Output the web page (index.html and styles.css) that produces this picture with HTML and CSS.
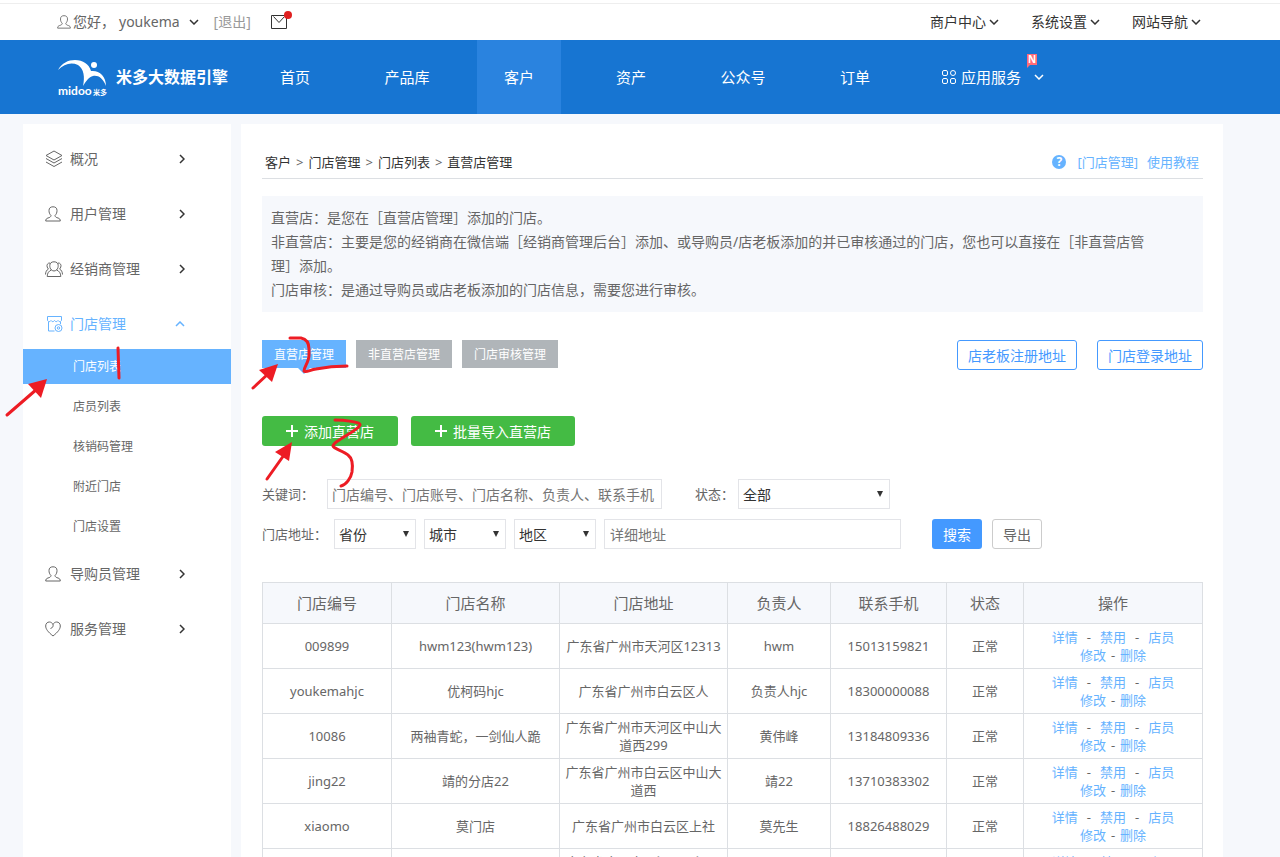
FILE: index.html
```html
<!DOCTYPE html>
<html lang="zh-CN">
<head>
    <meta charset="UTF-8">
    <meta name="viewport" content="width=device-width, initial-scale=1.0">
    <title>直营店管理</title>
    <link rel="stylesheet" href="styles.css">
</head>
<body>

<!-- shared icons -->
<svg class="sprite" aria-hidden="true">
    <symbol id="down" viewBox="0 0 10 6"><path d="M1 1l4 4 4-4"/></symbol>
    <symbol id="right" viewBox="0 0 6 10"><path d="M1 1l4 4-4 4"/></symbol>
    <symbol id="up" viewBox="0 0 10 6"><path d="M1 5l4-4 4 4"/></symbol>
    <symbol id="user" viewBox="0 0 16 16"><path d="M6 9.5C4.500 8 4 6.500 4 4.500 4 2 5.500.8 8 .8s4 1.200 4 3.700c0 2-.5 3.500-2 5 .2 1.500 1.200 2 3 2.500 1.500.4 2.200 1.200 2.300 3H.7c.1-1.800.8-2.600 2.300-3 1.800-.5 2.800-1 3-2.500z"/></symbol>
    <symbol id="plus" viewBox="0 0 12 12"><path d="M6 0v12M0 6h12"/></symbol>
</svg>

<div class="topbar">
    <div class="account">
        <svg class="account-icon"><use href="#user"/></svg>
        <span class="hello">您好，</span>
        <a class="username" href="#">youkema <svg class="down"><use href="#down"/></svg></a>
        <a class="logout" href="#">[退出]</a>
        <a class="mail" href="#" aria-label="消息">
            <svg width="16" height="14" viewBox="0 0 16 14"><path d="M.5.5h15v13H.5zM2.500 1.500l5.500 6 5.500-6"/></svg>
        </a>
    </div>
    <div class="top-links">
        <a href="#">商户中心 <svg class="down"><use href="#down"/></svg></a>
        <a href="#">系统设置 <svg class="down"><use href="#down"/></svg></a>
        <a href="#">网站导航 <svg class="down"><use href="#down"/></svg></a>
    </div>
</div>

<header class="header">
    <a class="logo" href="#">
        <svg class="logo-mark" width="50" height="38" viewBox="0 0 50 38">
            <path d="M0 12C4 5 10 2 17 2c8 0 14 4 16 11 8-1 15 5 15 15-3-8-8-11-13-10-4 1-7 5-10 10 2-9 1-17-5-21C13 4 6 6 0 12z"/>
            <circle cx="36" cy="7" r="3"/>
            <text class="logo-name" x="0" y="37">midoo</text>
            <text class="logo-sub" x="35" y="37">米多</text>
        </svg>
        <span>米多大数据引擎</span>
    </a>
    <nav class="nav">
        <a href="#">首页</a>
        <a href="#">产品库</a>
        <a class="active" href="#">客户</a>
        <a href="#">资产</a>
        <a href="#">公众号</a>
        <a href="#">订单</a>
    </nav>
    <a class="apps" href="#">
        <svg width="14" height="14" viewBox="0 0 14 14"><rect x=".5" y=".5" width="5" height="5" rx="1.500"/><rect x="8.500" y=".5" width="5" height="5" rx="2.500"/><rect x=".5" y="8.500" width="5" height="5" rx="1.500"/><rect x="8.500" y="8.500" width="5" height="5" rx="1.500"/></svg>
        <span>应用服务</span>
        <svg class="down"><use href="#down"/></svg>
        <span class="new">N</span>
    </a>
</header>

<div class="layout">
    <aside class="sidebar">
        <a class="menu" href="#">
            <svg class="menu-icon" viewBox="0 0 18 18"><path d="M9 1l8 4.500L9 10 1 5.500zM1 8.500L9 13l8-4.500M1 12l8 4.500 8-4.500"/></svg>
            <span>概况</span><svg class="right"><use href="#right"/></svg>
        </a>
        <a class="menu" href="#">
            <svg class="menu-icon user"><use href="#user"/></svg>
            <span>用户管理</span><svg class="right"><use href="#right"/></svg>
        </a>
        <a class="menu" href="#">
            <svg class="menu-icon" viewBox="0 0 18 18"><path d="M6.500 10C5 8.500 4.800 7 4.800 5.500 4.800 3.200 6.300 1.800 9 1.800s4.200 1.400 4.200 3.700c0 1.500-.2 3-1.700 4.500 2.500.8 4.300 3 4.300 6.500H2.200c0-3.500 1.800-5.700 4.300-6.500zM5 3C2.500 2.800 1.500 5 2.200 7c.3 1 .8 1.600 1.300 2C1.500 10 .6 12 .5 14.500M13 3c2.500-.2 3.500 2 2.800 4-.3 1-.8 1.600-1.300 2 2 1 2.900 3 3 5.500M6.500 10c1.500 1.300 3.500 1.300 5 0"/></svg>
            <span>经销商管理</span><svg class="right"><use href="#right"/></svg>
        </a>
        <a class="menu open" href="#">
            <svg class="menu-icon" viewBox="0 0 18 18"><path d="M2.500 1.500h14v4c-1 1.500-2.500 1.500-3.500 0-1 1.500-2.500 1.500-3.500 0-1 1.500-2.500 1.500-3.500 0-1 1.500-2.500 1.500-3.500 0zM3.500 7v9h6M15.500 7v2"/><circle cx="13.500" cy="13" r="3.500"/><circle cx="13.500" cy="13" r="1.200"/></svg>
            <span>门店管理</span><svg class="down"><use href="#up"/></svg>
        </a>
        <div class="submenu">
            <a class="active" href="#">门店列表</a>
            <a href="#">店员列表</a>
            <a href="#">核销码管理</a>
            <a href="#">附近门店</a>
            <a href="#">门店设置</a>
        </div>
        <a class="menu" href="#">
            <svg class="menu-icon user"><use href="#user"/></svg>
            <span>导购员管理</span><svg class="right"><use href="#right"/></svg>
        </a>
        <a class="menu" href="#">
            <svg class="menu-icon user" viewBox="0 0 16 16"><path d="M8 15C3 11 .7 8 .7 5 .7 2.500 2.300 1 4.300 1 6 1 7.300 2 8 3.500 8.700 2 10 1 11.700 1c2 0 3.600 1.500 3.600 4 0 3-2.300 6-7.300 10zM8 3.500c.5 1.800-.3 3.300-2.500 4"/></svg>
            <span>服务管理</span><svg class="right"><use href="#right"/></svg>
        </a>
    </aside>

    <main class="main">
        <div class="crumbs">
            <div class="path">
                <a href="#">客户</a><span>&gt;</span><a href="#">门店管理</a><span>&gt;</span><a href="#">门店列表</a><span>&gt;</span><a href="#">直营店管理</a>
            </div>
            <a class="help" href="#"><span class="help-icon">?</span>[门店管理]<span class="help-text">使用教程</span></a>
        </div>

        <div class="info">
            <p>直营店：是您在［直营店管理］添加的门店。</p>
            <p>非直营店：主要是您的经销商在微信端［经销商管理后台］添加、或导购员/店老板添加的并已审核通过的门店，您也可以直接在［非直营店管理］添加。</p>
            <p>门店审核：是通过导购员或店老板添加的门店信息，需要您进行审核。</p>
        </div>

        <div class="tabs-row">
            <div class="tabs">
                <button type="button" class="tab active">直营店管理</button>
                <button type="button" class="tab">非直营店管理</button>
                <button type="button" class="tab">门店审核管理</button>
            </div>
            <div class="address-links">
                <button type="button" class="outline-btn">店老板注册地址</button>
                <button type="button" class="outline-btn">门店登录地址</button>
            </div>
        </div>

        <div class="add-row">
            <button type="button" class="green-btn"><svg><use href="#plus"/></svg>添加直营店</button>
            <button type="button" class="green-btn"><svg><use href="#plus"/></svg>批量导入直营店</button>
        </div>

        <form class="filters">
            <div class="filter-row">
                <label class="label-keyword" for="keyword">关键词：</label>
                <input class="keyword" type="text" id="keyword" placeholder="门店编号、门店账号、门店名称、负责人、联系手机">
                <label class="label-status" for="status">状态：</label>
                <span class="select wide"><select id="status"><option>全部</option></select></span>
            </div>
            <div class="filter-row">
                <label class="label-address" for="province">门店地址：</label>
                <span class="select"><select id="province"><option>省份</option></select></span>
                <span class="select"><select aria-label="城市"><option>城市</option></select></span>
                <span class="select"><select aria-label="地区"><option>地区</option></select></span>
                <input class="address" type="text" aria-label="详细地址" placeholder="详细地址">
                <button type="button" class="search-btn">搜索</button>
                <button type="button" class="export-btn">导出</button>
            </div>
        </form>

        <table class="shops">
            <colgroup>
                <col class="col-id"><col class="col-name"><col class="col-addr"><col class="col-owner"><col class="col-phone"><col class="col-status"><col class="col-action">
            </colgroup>
            <thead>
                <tr><th>门店编号</th><th>门店名称</th><th>门店地址</th><th>负责人</th><th>联系手机</th><th>状态</th><th>操作</th></tr>
            </thead>
            <tbody>
                <tr>
                    <td>009899</td><td>hwm123(hwm123)</td><td>广东省广州市天河区12313</td><td>hwm</td><td>15013159821</td><td>正常</td>
                    <td><div class="actions wide"><a href="#">详情</a>-<a href="#">禁用</a>-<a href="#">店员</a></div><div class="actions"><a href="#">修改</a>-<a href="#">删除</a></div></td>
                </tr>
                <tr>
                    <td>youkemahjc</td><td>优柯码hjc</td><td>广东省广州市白云区人</td><td>负责人hjc</td><td>18300000088</td><td>正常</td>
                    <td><div class="actions wide"><a href="#">详情</a>-<a href="#">禁用</a>-<a href="#">店员</a></div><div class="actions"><a href="#">修改</a>-<a href="#">删除</a></div></td>
                </tr>
                <tr>
                    <td>10086</td><td>两袖青蛇，一剑仙人跪</td><td>广东省广州市天河区中山大道西299</td><td>黄伟峰</td><td>13184809336</td><td>正常</td>
                    <td><div class="actions wide"><a href="#">详情</a>-<a href="#">禁用</a>-<a href="#">店员</a></div><div class="actions"><a href="#">修改</a>-<a href="#">删除</a></div></td>
                </tr>
                <tr>
                    <td>jing22</td><td>靖的分店22</td><td>广东省广州市白云区中山大道西</td><td>靖22</td><td>13710383302</td><td>正常</td>
                    <td><div class="actions wide"><a href="#">详情</a>-<a href="#">禁用</a>-<a href="#">店员</a></div><div class="actions"><a href="#">修改</a>-<a href="#">删除</a></div></td>
                </tr>
                <tr>
                    <td>xiaomo</td><td>莫门店</td><td>广东省广州市白云区上社</td><td>莫先生</td><td>18826488029</td><td>正常</td>
                    <td><div class="actions wide"><a href="#">详情</a>-<a href="#">禁用</a>-<a href="#">店员</a></div><div class="actions"><a href="#">修改</a>-<a href="#">删除</a></div></td>
                </tr>
                <tr>
                    <td></td><td></td><td>广东省广州市天河区天河区天河</td><td></td><td></td><td></td>
                    <td><div class="actions wide"><a href="#">详情</a>-<a href="#">禁用</a>-<a href="#">店员</a></div><div class="actions"><a href="#">修改</a>-<a href="#">删除</a></div></td>
                </tr>
            </tbody>
        </table>
    </main>
</div>

<!-- hand-drawn steps 1, 2, 3 -->
<svg class="marks" width="600" height="500" viewBox="0 0 600 500" aria-hidden="true">
    <path d="M7 415l30-26M118 348l1 30"/>
    <path class="head" d="M47 379l-19 5 13 14z"/>
    <path d="M253 388l15-14M290 338h11c5 1 8 5 8 11v6c0 7-5 12-5 16 1 2 6-1 12-2 10-2 20-3 31-3"/>
    <path class="head" d="M278 364l-19 6 13 12z"/>
    <path d="M267 479l17-24M335 420c9 0 26 2 25 5-2 6-27 16-27 21 1 3 11 5 15 9 4 3 5 10 4 17-1 6-6 13-11 14"/>
    <path class="head" d="M292 442l-17 10 14 9z"/>
</svg>

</body>
</html>
```

FILE: styles.css
```css
* {
    box-sizing: border-box;
}
body {
    margin: 0;
    font-family: "Noto Sans", "Noto Sans CJK SC", sans-serif;
    font-size: 14px;
    line-height: 20px;
    color: #666;
    background-color: #f6f8fc;
}
a {
    color: inherit;
    text-decoration: none;
}
p {
    margin: 0;
}
button, input, select {
    font-family: inherit;
    font-size: 14px;
}
button {
    padding: 0;
    border: none;
    cursor: pointer;
}
svg {
    fill: none;
    stroke: currentColor;
    flex-shrink: 0;
}
.sprite {
    position: absolute;
    width: 0;
    height: 0;
}
.down {
    width: 10px;
    height: 6px;
    stroke-width: 1.5;
}
.right {
    width: 6px;
    height: 10px;
    color: #333;
    stroke-width: 1.5;
}

/* top bar */
.topbar {
    display: flex;
    justify-content: space-between;
    align-items: center;
    height: 40px;
    padding: 0 79px 0 57px;
    border-top: 3px solid #fff;
    background-color: #fff;
    box-shadow: inset 0 1px #eee;
}
.account, .top-links, .topbar a {
    display: flex;
    align-items: center;
}
.account-icon {
    width: 14px;
    height: 14px;
    margin-right: 2px;
}
.hello {
    margin-right: 4px;
}
.username {
    gap: 9px;
    margin-right: 15px;
}
.topbar .down {
    color: #333;
}
.logout {
    color: #999;
    margin-right: 20px;
}
.mail {
    position: relative;
    color: #333;
}
.mail::after {
    content: "";
    position: absolute;
    top: -4px;
    right: -5px;
    width: 8px;
    height: 8px;
    border-radius: 50%;
    background-color: #e02020;
}
.top-links {
    gap: 32px;
    color: #333;
}
.top-links a {
    gap: 3px;
}

/* header */
.header {
    display: flex;
    align-items: center;
    height: 74px;
    padding-left: 58px;
    color: #fff;
    background-color: #1775d2;
}
.logo {
    display: flex;
    align-items: center;
    gap: 8px;
    width: 195px;
    font-size: 16px;
    font-weight: bold;
    white-space: nowrap;
}
.logo-mark {
    fill: #fff;
    stroke: none;
}
.logo-name {
    font-family: Lato, sans-serif;
    font-size: 12px;
    font-weight: bold;
}
.logo-sub {
    font-size: 7px;
    font-weight: bold;
}
.nav {
    display: flex;
    gap: 28px;
    font-size: 15px;
}
.nav a {
    width: 84px;
    line-height: 74px;
    text-align: center;
}
.nav .active {
    background-color: #2a83df;
}
.apps {
    position: relative;
    display: flex;
    align-items: center;
    gap: 5px;
    margin-left: 45px;
    font-size: 15px;
}
.apps .down {
    margin-left: 8px;
}
.new {
    position: absolute;
    top: -13px;
    right: 7px;
    width: 10px;
    height: 11px;
    font-size: 10px;
    font-weight: bold;
    line-height: 11px;
    text-align: center;
    background-color: #ff6b78;
}
.new::after {
    content: "";
    position: absolute;
    top: 11px;
    left: 0;
    border-top: 3px solid #ff6b78;
    border-right: 3px solid transparent;
}

/* page layout */
.layout {
    display: flex;
    gap: 10px;
    padding: 10px 57px 0 23px;
}
.sidebar {
    display: flex;
    flex-direction: column;
    gap: 5px;
    width: 208px;
    flex-shrink: 0;
    padding-top: 10px;
    background-color: #fff;
}
.menu {
    display: flex;
    align-items: center;
    height: 50px;
    padding: 0 46px 0 22px;
}
.menu span {
    flex: 1;
}
.menu-icon {
    width: 18px;
    height: 18px;
    margin-right: 7px;
}
.menu-icon.user {
    width: 16px;
    height: 16px;
    margin-right: 9px;
}
.menu.open {
    margin-bottom: -5px;
    color: #66b3ff;
}
.submenu {
    display: flex;
    flex-direction: column;
    gap: 5px;
    font-size: 12px;
}
.submenu a {
    padding-left: 50px;
    line-height: 35px;
}
.submenu .active {
    color: #fff;
    background-color: #66b3ff;
}
.main {
    flex: 1;
    min-width: 0;
    padding: 24px 20px 40px 21px;
    background-color: #fff;
}

/* breadcrumb and notes */
.crumbs {
    display: flex;
    justify-content: space-between;
    height: 31px;
    padding: 4px 4px 0 3px;
    font-size: 13px;
    border-bottom: 1px solid #dcdfe3;
}
.path {
    display: flex;
    gap: 5px;
}
.path a {
    color: #333;
}
.help {
    display: flex;
    color: #66b3ff;
}
.help-icon {
    width: 14px;
    height: 14px;
    margin: 3px 11px 0 0;
    border-radius: 50%;
    font-size: 12px;
    font-weight: bold;
    line-height: 14px;
    text-align: center;
    color: #fff;
    background-color: #66b3ff;
}
.help-text {
    margin-left: 9px;
}
.info {
    margin-top: 17px;
    padding: 10px 45px 10px 9px;
    line-height: 24px;
    background-color: #f6f8fc;
}

/* tabs and buttons */
.tabs-row {
    display: flex;
    justify-content: space-between;
    margin-top: 28px;
}
.tabs {
    display: flex;
    align-items: flex-start;
    gap: 10px;
}
.tab {
    position: relative;
    height: 28px;
    padding: 0 12px;
    font-size: 12px;
    color: #fff;
    background-color: #b0b5b9;
}
.tab.active {
    background-color: #66b3ff;
}
.tab.active::after {
    content: "";
    position: absolute;
    top: 28px;
    left: 50%;
    margin-left: -6px;
    border: 6px solid transparent;
    border-top-color: #66b3ff;
    border-bottom: none;
}
.address-links {
    display: flex;
    gap: 20px;
}
.outline-btn {
    height: 30px;
    padding: 0 10px;
    border: 1px solid #4499ff;
    border-radius: 3px;
    color: #4499ff;
    background-color: #fff;
}
.add-row {
    display: flex;
    gap: 13px;
    margin-top: 46px;
}
.green-btn {
    display: flex;
    align-items: center;
    gap: 6px;
    height: 30px;
    padding: 0 24px;
    border-radius: 3px;
    color: #fff;
    background-color: #44bb44;
}
.green-btn svg {
    width: 12px;
    height: 12px;
    stroke-width: 2;
}

/* filters */
.filters {
    margin-top: 33px;
    font-size: 13px;
}
.filter-row {
    display: flex;
    align-items: center;
    margin-bottom: 10px;
}
.label-keyword {
    width: 65px;
}
.label-status {
    width: 43px;
    margin-left: 33px;
}
.label-address {
    width: 72px;
}
.filters input, .filters select {
    height: 30px;
    padding: 0 4px;
    border: 1px solid #e3e4e8;
    border-radius: 0;
    background-color: #fff;
}
.filters input::placeholder {
    color: #757575;
}
.filters .keyword {
    width: 335px;
}
.filters .address {
    width: 297px;
    margin-right: 31px;
    padding-left: 5px;
}
.select {
    position: relative;
    width: 82px;
    margin-right: 8px;
}
.select.wide {
    width: 152px;
    margin-right: 0;
}
.select select {
    display: block;
    width: 100%;
    color: #333;
    appearance: none;
}
.select::after {
    content: "";
    position: absolute;
    top: 12px;
    right: 7px;
    border: 3px solid transparent;
    border-top: 6px solid #333;
    border-bottom: none;
    pointer-events: none;
}
.search-btn, .export-btn {
    width: 50px;
    height: 30px;
    border-radius: 3px;
}
.search-btn {
    margin-right: 10px;
    color: #fff;
    background-color: #4499ff;
}
.export-btn {
    border: 1px solid #ccc;
    color: #666;
    background-color: #fff;
}

/* shop table */
.shops {
    width: 100%;
    margin-top: 33px;
    table-layout: fixed;
    border-collapse: collapse;
    font-size: 13px;
    line-height: 18px;
    text-align: center;
}
.shops th, .shops td {
    padding: 0 5px;
    border: 1px solid #dcdfe3;
}
.shops th {
    height: 41px;
    font-size: 15px;
    font-weight: normal;
    background-color: #f6f8fc;
}
.shops td {
    height: 45px;
}
.shops a {
    color: #66b3ff;
}
.actions {
    display: flex;
    justify-content: center;
    gap: 5px;
}
.actions.wide {
    gap: 9px;
}
.col-id {
    width: 129px;
}
.col-name, .col-addr {
    width: 168px;
}
.col-owner {
    width: 103px;
}
.col-phone {
    width: 116px;
}
.col-status {
    width: 77px;
}

/* red marker over the page */
.marks {
    position: absolute;
    top: 0;
    left: 0;
    color: #ed1c24;
    stroke-width: 3;
    stroke-linecap: round;
    stroke-linejoin: round;
    pointer-events: none;
}
.marks .head {
    fill: currentColor;
    stroke: none;
}
```
